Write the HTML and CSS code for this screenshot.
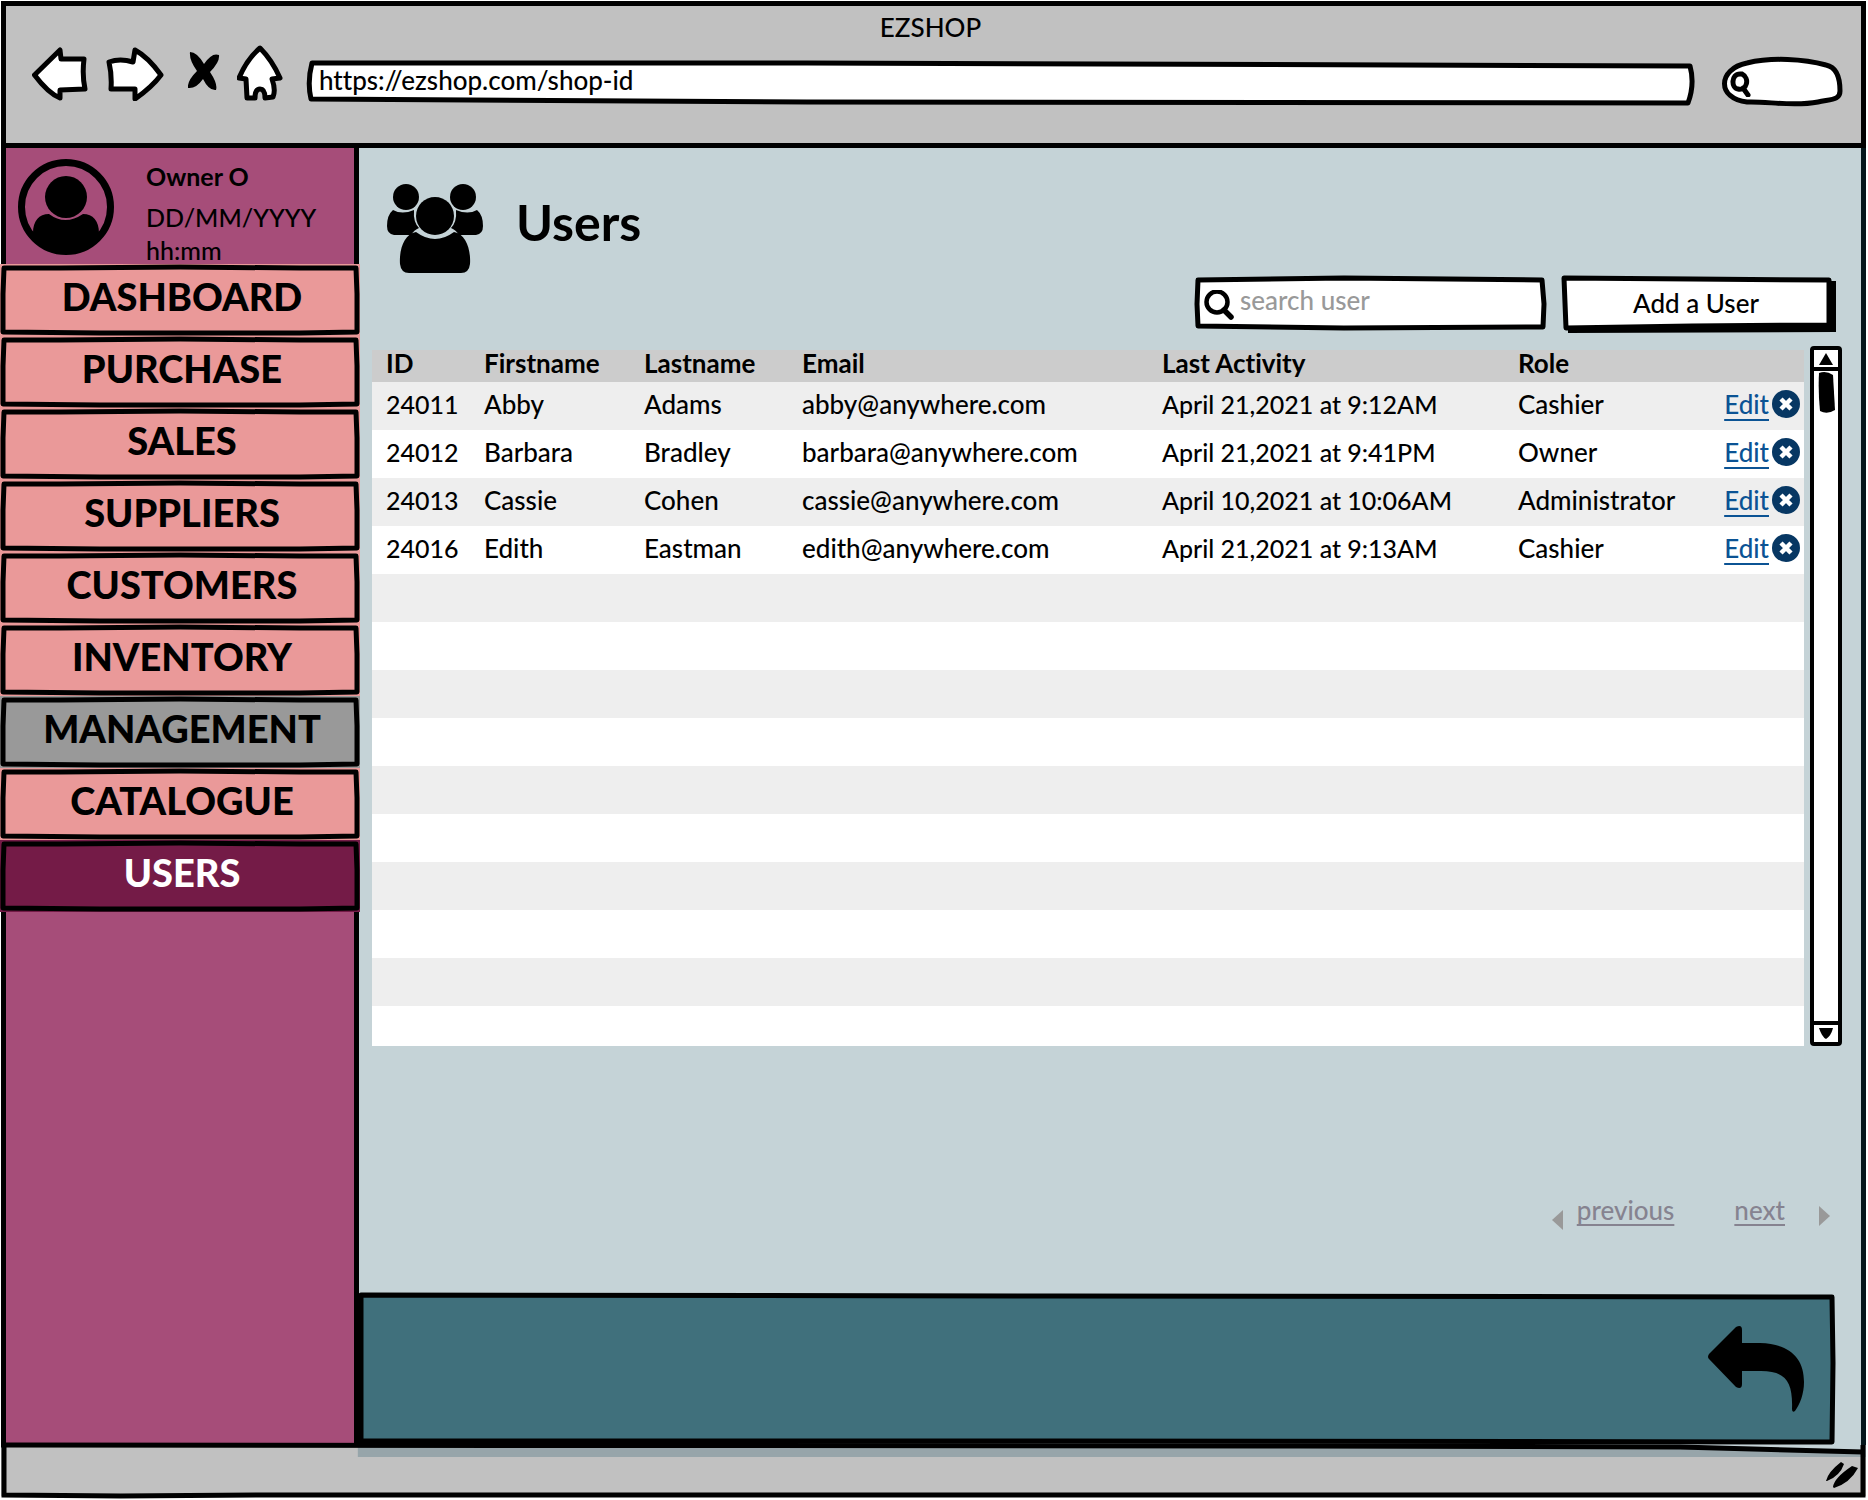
FILE: index.html
```html
<!DOCTYPE html>
<html lang="en">
<head>
<meta charset="utf-8">
<title>EZSHOP</title>
<meta name="viewport" content="width=device-width, initial-scale=1">
<link rel="stylesheet" href="styles.css">
</head>
<body>
<svg class="defs" aria-hidden="true">
  <symbol id="nav-frame" viewBox="0 0 360 72" preserveAspectRatio="none">
    <path d="M4 4L60 4L180 3L300 4L356 4L357 30L357 68L300 69L190 69L100 69L3 68L3 30Z"/>
  </symbol>
  <symbol id="cross" viewBox="0 0 28 28">
    <circle cx="14" cy="14" r="14" fill="#073763"/>
    <path d="M9 9L19 19M19 9L9 19" stroke="#fff" stroke-width="4.500"/>
  </symbol>
</svg>
<div class="window">
  <header class="browser">
    <div class="browser-title">EZSHOP</div>
    <div class="toolbar">
      <button class="tool back" aria-label="Back"><svg width="56" height="54" viewBox="0 0 56 54"><path d="M2.500 28L28 3L29 12L52 12Q50 28 53 42L28 43L28 51Q16 46 2.500 28Z" class="tool-shape"/></svg></button>
      <button class="tool forward" aria-label="Forward"><svg width="58" height="54" viewBox="0 0 58 54"><path d="M3 15Q14 11 27 15L29 3Q42 10 55 28Q46 40 29 52L29 42L5 42Q6 28 3 15Z" class="tool-shape"/></svg></button>
      <button class="tool stop" aria-label="Stop"><svg width="32" height="40" viewBox="0 0 32 40"><path d="M2 1Q9 1 16 13Q24 1 31 4Q32 11 22 21Q30 33 28 39Q21 40 15 28Q8 38 0 37Q-1 30 9 20Q1 9 2 1Z"/></svg></button>
      <button class="tool home" aria-label="Home"><svg width="46" height="56" viewBox="0 0 46 56"><path d="M23 3Q35 15 43 33L35 34Q39 45 36 52L28 53Q28 44 23 44Q18 44 18 53L10 53L9 34L2 33Q10 14 23 3Z" class="tool-shape"/></svg></button>
      <div class="address">
        <svg class="frame" viewBox="0 0 1387 45" preserveAspectRatio="none" aria-hidden="true"><path d="M5 3L500 3L1383 6Q1388 24 1381 43L500 42L4 39Q0 22 5 3Z"/></svg>
        <input type="text" value="https://ezshop.com/shop-id" aria-label="Address">
      </div>
      <div class="web-search">
        <svg class="frame" viewBox="0 0 121 50" preserveAspectRatio="none" aria-hidden="true"><path d="M25 45C-5 42-5 12 25 6C50 0 82 2 104 8C114 10 118 20 118 34C118 43 110 42 96 45C70 50 45 44 25 45Z"/></svg>
        <svg class="web-search-icon" width="22" height="26" viewBox="0 0 22 26" aria-hidden="true"><path d="M10 3C1 3 1 17 8 18C17 20 20 7 12 3ZM13 17L18 24"/></svg>
        <input type="search" aria-label="Web search">
      </div>
    </div>
  </header>

  <div class="page">
    <aside class="sidebar">
      <div class="profile">
        <svg width="96" height="96" viewBox="0 0 96 96" aria-hidden="true"><circle cx="48" cy="48" r="44.500" fill="none" stroke="#000" stroke-width="7"/><circle cx="48" cy="38" r="21"/><path d="M15 74C15 62 21 55 31 55Q47 67 65 55C75 55 81 62 81 74Q66 92 48 92Q28 92 15 74Z"/></svg>
        <div class="profile-text">
          <div class="profile-name">Owner O</div>
          <div class="profile-date">DD/MM/YYYY</div>
          <div class="profile-time">hh:mm</div>
        </div>
      </div>
      <nav class="menu" aria-label="Main">
        <a href="#dashboard"><svg class="frame"><use href="#nav-frame"/></svg><span>DASHBOARD</span></a>
        <a href="#purchase"><svg class="frame"><use href="#nav-frame"/></svg><span>PURCHASE</span></a>
        <a href="#sales"><svg class="frame"><use href="#nav-frame"/></svg><span>SALES</span></a>
        <a href="#suppliers"><svg class="frame"><use href="#nav-frame"/></svg><span>SUPPLIERS</span></a>
        <a href="#customers"><svg class="frame"><use href="#nav-frame"/></svg><span>CUSTOMERS</span></a>
        <a href="#inventory"><svg class="frame"><use href="#nav-frame"/></svg><span>INVENTORY</span></a>
        <a href="#management" class="group"><svg class="frame"><use href="#nav-frame"/></svg><span>MANAGEMENT</span></a>
        <a href="#catalogue"><svg class="frame"><use href="#nav-frame"/></svg><span>CATALOGUE</span></a>
        <a href="#users" class="current" aria-current="page"><svg class="frame"><use href="#nav-frame"/></svg><span>USERS</span></a>
      </nav>
    </aside>

    <main class="content">
      <div class="heading">
        <svg width="96" height="90" viewBox="0 0 96 90" aria-hidden="true"><circle cx="19" cy="13" r="13"/><circle cx="76" cy="13" r="13"/><path d="M6 26Q15 31 27 26Q26 38 32 44Q27 46 24 51L7 51Q0 50 0 42Q0 31 6 26ZM90 26Q81 31 69 26Q70 38 64 44Q69 46 72 51L89 51Q96 50 96 42Q96 31 90 26Z"/><circle cx="48" cy="32" r="19"/><path d="M29 48Q48 62 67 48C79 50 84 66 83 80Q82 89 74 89L22 89Q14 89 13 80C12 66 17 50 29 48Z"/></svg>
        <h1>Users</h1>
      </div>

      <div class="actions">
        <div class="search">
          <svg class="frame" viewBox="0 0 352 54" preserveAspectRatio="none" aria-hidden="true"><path d="M4 4L150 2L348 4L350 28L349 51L150 52L4 50L3 28Z"/></svg>
          <svg width="30" height="30" viewBox="0 0 30 30" aria-hidden="true"><circle cx="13" cy="12" r="10.500" fill="none" stroke="#000" stroke-width="4.500"/><path d="M20 20L27 27" stroke="#000" stroke-width="5.500" stroke-linecap="round"/></svg>
          <input type="search" placeholder="search user" aria-label="search user">
        </div>
        <button class="add">
          <svg class="frame" viewBox="0 0 274 57" preserveAspectRatio="none" aria-hidden="true"><path d="M6 5L274 5L274 56L6 57Z" class="shadow"/><path d="M2 2L130 3L267 4L267 49L130 50L4 52Z"/></svg>
          <span>Add a User</span>
        </button>
      </div>

      <div class="listing">
        <table>
          <colgroup><col class="c-id"><col class="c-first"><col class="c-last"><col><col class="c-activity"><col class="c-role"><col class="c-edit"></colgroup>
          <thead><tr><th>ID</th><th>Firstname</th><th>Lastname</th><th>Email</th><th>Last Activity</th><th>Role</th><td></td></tr></thead>
          <tbody>
            <tr><td class="num">24011</td><td>Abby</td><td>Adams</td><td>abby@anywhere.com</td><td class="num">April 21,2021 at 9:12AM</td><td>Cashier</td><td><div class="row-actions"><a href="#edit-24011">Edit</a><button aria-label="Remove Abby"><svg><use href="#cross"/></svg></button></div></td></tr>
            <tr><td class="num">24012</td><td>Barbara</td><td>Bradley</td><td>barbara@anywhere.com</td><td class="num">April 21,2021 at 9:41PM</td><td>Owner</td><td><div class="row-actions"><a href="#edit-24012">Edit</a><button aria-label="Remove Barbara"><svg><use href="#cross"/></svg></button></div></td></tr>
            <tr><td class="num">24013</td><td>Cassie</td><td>Cohen</td><td>cassie@anywhere.com</td><td class="num">April 10,2021 at 10:06AM</td><td>Administrator</td><td><div class="row-actions"><a href="#edit-24013">Edit</a><button aria-label="Remove Cassie"><svg><use href="#cross"/></svg></button></div></td></tr>
            <tr><td class="num">24016</td><td>Edith</td><td>Eastman</td><td>edith@anywhere.com</td><td class="num">April 21,2021 at 9:13AM</td><td>Cashier</td><td><div class="row-actions"><a href="#edit-24016">Edit</a><button aria-label="Remove Edith"><svg><use href="#cross"/></svg></button></div></td></tr>
            <tr><td colspan="7"></td></tr>
            <tr><td colspan="7"></td></tr>
            <tr><td colspan="7"></td></tr>
            <tr><td colspan="7"></td></tr>
            <tr><td colspan="7"></td></tr>
            <tr><td colspan="7"></td></tr>
            <tr><td colspan="7"></td></tr>
            <tr><td colspan="7"></td></tr>
            <tr><td colspan="7"></td></tr>
            <tr class="partial"><td colspan="7"></td></tr>
          </tbody>
        </table>
        <div class="scrollbar">
          <button aria-label="Scroll up"><svg width="14" height="14" viewBox="0 0 14 14"><path d="M7 1L14 13L0 13Z"/></svg></button>
          <div class="track"><svg width="17" height="42" viewBox="0 0 17 42" aria-hidden="true"><path d="M1 2Q8-1 15 4L17 39Q9 44 2 40Q0 20 1 2Z"/></svg></div>
          <button aria-label="Scroll down"><svg width="14" height="12" viewBox="0 0 14 12"><path d="M0 0L14 0Q12 8 7 11Q3 9 0 0Z"/></svg></button>
        </div>
      </div>

      <div class="pager">
        <svg class="arrow-prev" width="11" height="20" viewBox="0 0 11 20" aria-hidden="true"><path d="M11 0L11 20L0 10Z"/></svg>
        <a href="#previous">previous</a>
        <a href="#next" class="next">next</a>
        <svg width="11" height="20" viewBox="0 0 11 20" aria-hidden="true"><path d="M0 0L0 20L11 10Z"/></svg>
      </div>

      <div class="bottom-bar">
        <svg class="frame" viewBox="0 0 1478 152" preserveAspectRatio="none" aria-hidden="true"><path d="M2 2L700 3L1474 4L1475 70L1474 149L700 148L2 148Z"/></svg>
        <button aria-label="Go back"><svg width="96" height="86" viewBox="0 0 96 86"><path d="M1 28L28 1Q34-2 34 4L34 17L52 17C82 18 96 32 96 56C96 68 92 78 87 85Q84 87 84 83C85 56 78 45 53 45L34 45L34 58Q34 64 28 61L1 33Q-1 31 1 28Z"/></svg></button>
      </div>
    </main>
  </div>

  <footer class="status">
    <svg class="edges" viewBox="0 0 1866 55" preserveAspectRatio="none" aria-hidden="true"><path d="M357 0L1866 0L1866 12L357 12Z" class="tint"/><path d="M1680 0L1861 0L1861 7L1680 3Z" class="pale"/><path d="M0 0L1300 1L1680 2L1863 7" class="line"/><path d="M3 0L3 50L120 51L260 50L1680 50L1863 50L1863 0" class="line"/></svg>
    <svg class="grip" width="32" height="26" viewBox="0 0 32 26" aria-hidden="true"><path d="M0 19Q2 10 15 0L18 2Q14 14 1 19ZM7 25Q8 16 26 4L32 6Q24 21 8 26Z"/></svg>
  </footer>
</div>
</body>
</html>
```
FILE: styles.css
```css
* { box-sizing: border-box; }

body {
  margin: 0;
  background: #fff;
  color: #000;
  font: 500 26px/32px Lato, "Noto Sans", sans-serif;
  font-variant-ligatures: none;
}

button,
input {
  margin: 0;
  padding: 0;
  border: 0;
  background: none;
  color: inherit;
  font: inherit;
  outline: none;
}

button { cursor: pointer; }
svg { display: block; }
.defs { position: absolute; width: 0; height: 0; }

.frame {
  position: absolute;
  inset: 0;
  width: 100%;
  height: 100%;
  overflow: visible;
  fill: #fff;
  stroke: #000;
  stroke-width: 5px;
  stroke-linejoin: round;
}

.window {
  display: flex;
  flex-direction: column;
  min-height: 100vh;
  padding: 1px 2px 0 1px;
}

/* Browser chrome */
.browser {
  height: 147px;
  padding: 5px 18px 0 26px;
  border: 5px solid #000;
  background: #c1c1c1;
}

.browser-title { padding-right: 14px; text-align: center; margin-bottom: -3px; }

.toolbar { display: flex; align-items: flex-start; }
.tool { flex: none; margin-right: 18px; }
.tool-shape { fill: #fff; stroke: #000; stroke-width: 5px; stroke-linejoin: round; }
.back { padding-top: 7px; }
.forward { padding-top: 7px; margin-right: 24px; }
.stop { padding-top: 11px; margin-right: 17px; }
.home { padding-top: 5px; margin-right: 24px; }

.address { position: relative; flex: 1; height: 45px; margin-top: 20px; }
.address input { position: relative; width: 100%; height: 40px; padding: 0 12px; }

.web-search { position: relative; flex: none; width: 121px; height: 50px; margin: 17px 0 0 28px; }
.web-search-icon { position: absolute; left: 8px; top: 14px; fill: none; stroke: #000; stroke-width: 5px; stroke-linecap: round; }
.web-search input { position: relative; width: 100%; height: 50px; padding: 0 16px 0 32px; }

/* Page */
.page { display: flex; flex: 1; background: #c5d3d7; }

.sidebar {
  display: flex;
  flex-direction: column;
  flex: none;
  width: 358px;
  border: solid #000;
  border-width: 0 5px 0 5px;
  background: #a64d79;
}

.profile { display: flex; height: 116px; padding: 11px 12px 0; }
.profile svg { flex: none; }
.profile-text { margin: 1px 0 0 32px; font-size: 25px; }
.profile-name { line-height: 32px; font-weight: 700; }
.profile-date { line-height: 50px; }
.profile-time { line-height: 16px; }

.menu { margin: 0 -6px; }
.menu a {
  position: relative;
  display: block;
  height: 72px;
  padding: 8px 0 0 4px;
  background: #ea9999;
  color: #000;
  font-size: 38px;
  line-height: 48px;
  font-weight: 900;
  text-align: center;
  text-decoration: none;
}
.menu .frame { fill: none; }
.menu span { position: relative; }
.menu .group { background: #999; }
.menu .current { background: #741b47; color: #fff; }

.content {
  display: flex;
  flex-direction: column;
  flex: 1;
  min-width: 0;
  border-right: 5px solid #04161b;
}

.heading { display: flex; gap: 33px; padding: 36px 28px 0; }
.heading h1 { margin: 10px 0 0; font-size: 50px; line-height: 56px; }

.actions { display: flex; justify-content: flex-end; gap: 16px; margin: 2px 25px 0 0; }
.search { position: relative; display: flex; width: 352px; height: 54px; padding: 14px 12px 0 10px; }
.search > svg:not(.frame) { position: relative; flex: none; }
.search input { position: relative; flex: 1; min-width: 0; height: 20px; padding-left: 6px; }
.search input::placeholder { color: #999; opacity: 1; }
.add { position: relative; width: 274px; height: 57px; padding: 0 6px 4px 0; }
.add span { position: relative; }
.shadow { fill: #000; stroke: none; }

.listing { display: flex; gap: 6px; margin: 13px 19px 0 13px; }

table { flex: 1; width: 100%; margin-top: 4px; border-collapse: collapse; table-layout: fixed; }
th, td { padding: 0 0 4px 14px; text-align: left; white-space: nowrap; }
thead tr { height: 32px; background: #ccc; }
th { padding-bottom: 6px; line-height: 24px; }
tbody tr { height: 48px; background: #fff; }
tbody tr:nth-child(odd) { background: #eee; }
tbody .partial { height: 40px; }
.num { font-size: 25px; }
.c-id { width: 98px; }
.c-first { width: 160px; }
.c-last { width: 158px; }
.c-activity { width: 356px; }
.c-role { width: 196px; }
.c-edit { width: 104px; }

.row-actions { display: flex; align-items: center; justify-content: flex-end; gap: 3px; padding-right: 4px; }
.row-actions a { color: #0b5394; text-decoration-thickness: 2px; text-underline-offset: 5px; }
.row-actions button { height: 28px; }
.row-actions svg { width: 28px; height: 28px; }

.scrollbar { display: flex; flex-direction: column; flex: none; width: 32px; border: 4px solid #000; border-radius: 4px; background: #fff; }
.scrollbar button { display: grid; place-items: center; height: 17px; }
.track { flex: 1; border: solid #000; border-width: 4px 0; }
.track svg { margin: 0 0 0 4px; }

.pager { display: flex; align-items: center; justify-content: flex-end; margin: 144px 31px 0 0; color: #868390; }
.pager a { color: inherit; text-decoration-thickness: 2px; text-underline-offset: 4px; }
.pager svg { fill: #999; margin-top: 12px; }
.pager .arrow-prev { margin: 20px 14px 0 0; }
.pager .next { margin: 0 34px 0 60px; }

.bottom-bar { position: relative; display: flex; justify-content: flex-end; height: 152px; margin: auto 25px 0 0; padding: 33px 32px 0; }
.bottom-bar .frame { fill: #40707c; }
.bottom-bar button { position: relative; height: 86px; }

.status { position: relative; display: flex; justify-content: flex-end; height: 55px; padding: 17px 8px 0; }
.edges { position: absolute; left: 0; top: 0; width: 100%; height: 55px; overflow: visible; background: linear-gradient(#c1c1c1, #c1c1c1) 0 0 / 100% 51px no-repeat; }
.tint { fill: #97a5aa; }
.pale { fill: #c5d3d7; }
.line { fill: none; stroke: #000; stroke-width: 5px; }
.grip { position: relative; }
```
